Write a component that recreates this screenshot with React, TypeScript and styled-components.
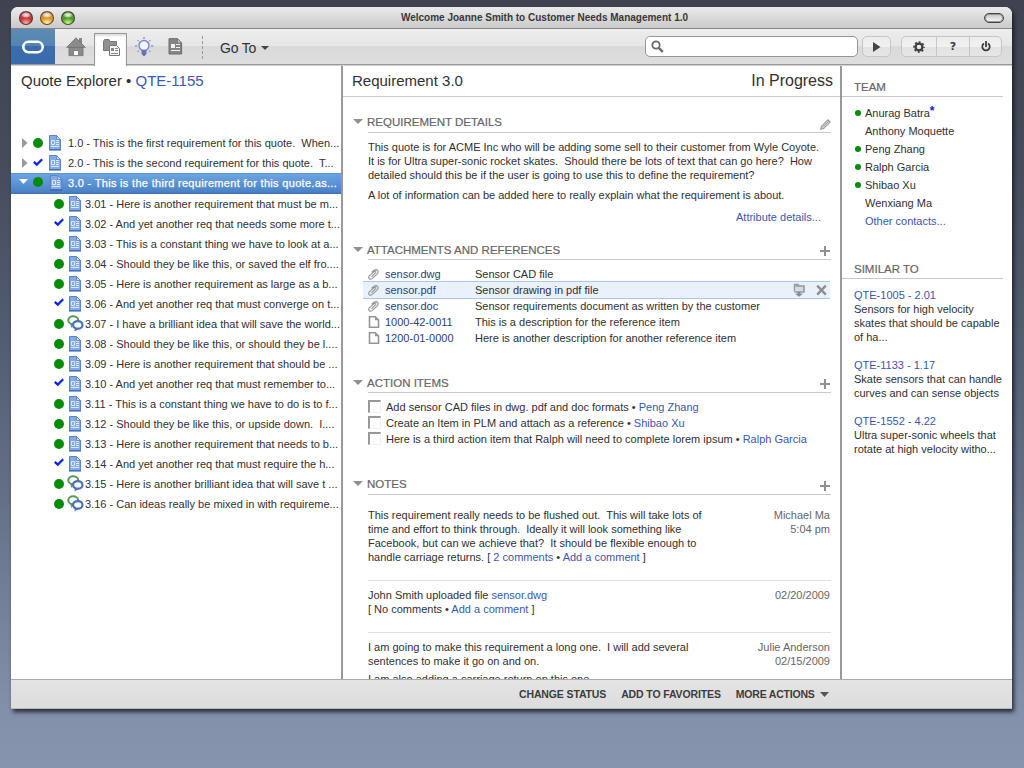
import React from "react";
import styled, { createGlobalStyle, css } from "styled-components";

const Global = createGlobalStyle`
  * { box-sizing: border-box; }
  body {
    margin: 0;
    height: 768px;
    overflow: hidden;
    background: linear-gradient(#3f434f 0px, #444b5a 150px, #525c70 330px, #657088 500px, #8390aa 710px, #8694ae 768px);
    font-family: "Liberation Sans", Arial, sans-serif;
    font-size: 11px;
    line-height: 14px;
    color: #303030;
  }
`;

const Desktop = styled.div`
  padding: 7px 12px 0 11px;
`;
const Window = styled.div`
  width: 1001px;
  height: 702px;
  display: flex;
  flex-direction: column;
  border-radius: 7px 7px 0 0;
  background: #fff;
  box-shadow: 2px 3px 4px rgba(20, 24, 34, 0.85);
  overflow: hidden;
`;

const T = styled.span<{ $ls?: number; $heavy?: boolean }>`
  white-space: pre;
  letter-spacing: ${(p) => p.$ls ?? 0}px;
  ${(p) => p.$heavy && "-webkit-text-stroke: 0.25px currentColor;"}
`;
const Link = styled(T)<{ $dark?: boolean }>`
  color: ${(p) => (p.$dark ? "#2b4178" : "#3a57b0")};
`;

/* Title bar */
const TitleBar = styled.header`
  flex: none;
  height: 22px;
  display: flex;
  align-items: center;
  padding: 0 8px;
  background: linear-gradient(#ebebeb, #cacaca);
  border-bottom: 1px solid #858585;
`;
const Lights = styled.div`
  width: 120px;
  display: flex;
  gap: 7px;
`;
const Light = styled.span<{ $a: string; $b: string; $c: string }>`
  width: 14px;
  height: 14px;
  border-radius: 50%;
  border: 1px solid rgba(50, 30, 30, 0.7);
  background: radial-gradient(ellipse 5px 3px at 50% 3px, rgba(255, 255, 255, 0.95) 0, rgba(255, 255, 255, 0.55) 60%, transparent 100%),
    radial-gradient(ellipse 6px 5px at 50% 11px, ${(p) => p.$c}, transparent),
    linear-gradient(${(p) => p.$a}, ${(p) => p.$b});
`;
const WindowTitle = styled.h1`
  flex: 1;
  margin: 0;
  padding-left: 66px;
  text-align: center;
  font-size: 10px;
  font-weight: bold;
  line-height: 20px;
  color: #383838;
`;
const PillWrap = styled.div`
  width: 120px;
  display: flex;
  justify-content: flex-end;
`;
const Pill = styled.span`
  width: 20px;
  height: 10px;
  border: 1px solid #444;
  border-radius: 5px;
  background: linear-gradient(#c4c4c4, #fafafa);
  box-shadow: inset 0 0 0 1px #999;
`;

/* Toolbar */
const Toolbar = styled.nav`
  flex: none;
  height: 37px;
  display: flex;
  align-items: flex-start;
  background: linear-gradient(#ededed 0, #e6e6e6 17px, #dadada 17px, #dedede 35px, #989898 35px, #989898 36px, #cfcfcf 36px);
`;
const Logo = styled.div`
  width: 44px;
  height: 35px;
  display: flex;
  align-items: center;
  justify-content: center;
  background: linear-gradient(#5e8bb5, #5484b2 17px, #3b6dae 17px, #3a6baa);
`;
const ToolIcon = styled.div<{ $w: number; $active?: boolean; $shift?: number }>`
  width: ${(p) => p.$w}px;
  height: 35px;
  display: flex;
  align-items: center;
  justify-content: center;
  padding-left: ${(p) => p.$shift ?? 0}px;
  ${(p) =>
    p.$active &&
    css`
      height: 33px;
      margin-top: 4px;
      padding-bottom: 4px;
      background: #fff;
      border: 1px solid #999;
      border-bottom: 0;
      box-shadow: inset 0 2px 2px #ddd;
    `}
`;
const Separator = styled.span`
  margin: 7px 17px 0 13px;
  height: 23px;
  border-left: 1px dashed #999;
`;
const GoTo = styled.div`
  display: flex;
  align-items: center;
  gap: 5px;
  width: 425px;
  height: 38px;
  font-size: 14px;
  color: #333;
`;
const Search = styled.div`
  width: 213px;
  height: 21px;
  margin: 7px 4px 0 0;
  padding: 3px 5px;
  border: 1px solid #959595;
  border-radius: 5px;
  background: #fff;
`;
const ButtonGroup = styled.div`
  display: flex;
  height: 21px;
  margin: 7px 10px 0 0;
  border: 1px solid #c6c6c6;
  border-radius: 5px;
  background: linear-gradient(#ececec, #f1f1f1 50%, #e2e2e2 52%, #e6e6e6);
`;
const ToolButton = styled.button<{ $w: number }>`
  width: ${(p) => p.$w}px;
  padding: 0;
  border: 0;
  background: none;
  display: flex;
  align-items: center;
  justify-content: center;
  font: bold 11px "DejaVu Sans", sans-serif;
  color: #3a3a3a;
  & + & { border-left: 1px solid #c6c6c6; }
`;

/* Panels */
const Panels = styled.main`
  flex: 1;
  min-height: 0;
  display: grid;
  grid-template-columns: 332px 499px 170px;
`;
const Explorer = styled.section`
  border-right: 2px solid #999;
  overflow: hidden;
`;
const ExplorerTitle = styled.h2`
  margin: 0;
  height: 67px;
  padding: 6px 0 0 10px;
  font-size: 15px;
  font-weight: normal;
  line-height: 18px;
`;
const TreeRow = styled.div<{ $child?: boolean; $selected?: boolean }>`
  height: 20px;
  display: flex;
  align-items: center;
  padding-left: ${(p) => (p.$child ? 42 : 8)}px;
  ${(p) =>
    p.$selected &&
    css`
      height: 21px;
      padding-bottom: 1px;
      color: #fff;
      background: linear-gradient(#4a84c8 0, #6da5e3 1px, #4a82c6 19px, #3c70b0);
    `}
`;
const Cell = styled.span<{ $w: number; $up?: number }>`
  flex: none;
  width: ${(p) => p.$w}px;
  display: flex;
  justify-content: center;
  padding-bottom: ${(p) => p.$up ?? 0}px;
`;
const Dot = styled.span<{ $s: number }>`
  width: ${(p) => p.$s}px;
  height: ${(p) => p.$s}px;
  border-radius: 50%;
  background: #058c05;
`;

const Detail = styled.section`
  border-right: 2px solid #999;
  overflow: hidden;
`;
const DetailHeader = styled.div`
  height: 31px;
  margin-bottom: 16px;
  display: flex;
  justify-content: space-between;
  padding: 6px 7px 0 9px;
  line-height: 18px;
  border-bottom: 1px solid #cbcbd2;
`;
const Big = styled.span<{ $size: number }>`
  font-size: ${(p) => p.$size}px;
`;
const Section = styled.section<{ $h: number }>`
  height: ${(p) => p.$h}px;
  padding-left: 10px;
`;
const SectionHead = styled.div`
  height: 20px;
  display: flex;
  width: 478px;
`;
const Arrow = styled.span<{ $low?: boolean }>`
  width: 15px;
  padding-top: ${(p) => (p.$low ? 7 : 6)}px;
  display: flex;
  align-items: flex-start;
`;
const SectionTitle = styled.h3<{ $low?: boolean }>`
  flex: 1;
  margin: 0;
  display: flex;
  justify-content: space-between;
  font-size: 11.5px;
  font-weight: normal;
  line-height: ${(p) => (p.$low ? 21 : 19)}px;
  color: #666;
  border-bottom: 1px solid #c8c8c8;
`;
const TitleText = styled(T)`
  margin-left: -1px;
  -webkit-text-stroke: 0.2px currentColor;
`;
const HeadIcon = styled.span`
  display: flex;
  padding-top: 6px;
`;
const Para = styled.p<{ $top: number }>`
  margin: ${(p) => p.$top}px 0 0 15px;
`;
const More = styled.div`
  margin: 8px 19px 0 0;
  text-align: right;
`;
const List = styled.div`
  padding-top: 6px;
`;
const FileRow = styled.div<{ $active?: boolean }>`
  height: 16px;
  width: 467px;
  margin-left: 10px;
  display: flex;
  align-items: center;
  ${(p) =>
    p.$active &&
    css`
      height: 18px;
      margin-top: -1px;
      margin-bottom: -1px;
      background: #e8f1fc;
      border: solid #aac8ec;
      border-width: 1px 0;
    `}
`;
const FileIcon = styled.span`
  width: 22px;
  padding-left: 5px;
  display: flex;
`;
const FileName = styled.span`
  width: 90px;
`;
const FileTools = styled.span`
  margin-left: auto;
  display: flex;
  align-items: center;
  gap: 11px;
  padding-right: 3px;
`;
const Task = styled.div`
  height: 16px;
  display: flex;
  align-items: center;
  margin-left: 15px;
`;
const Check = styled.span`
  width: 13px;
  height: 13px;
  margin: 0 5px 1px 0;
  border: 1px solid #f0f0f0;
  border-top: 2px solid #999;
  border-left: 2px solid #999;
`;
const Note = styled.article<{ $h: number; $top: number }>`
  height: ${(p) => p.$h}px;
  width: 463px;
  margin-left: 15px;
  padding: ${(p) => p.$top}px 1px 0 0;
  display: flex;
  justify-content: space-between;
  border-bottom: 1px solid #e0e0e0;
`;
const Line = styled.div<{ $gap?: number }>`
  height: 14px;
  margin-top: ${(p) => p.$gap ?? 0}px;
  white-space: pre;
`;
const Meta = styled.div`
  text-align: right;
  color: #666;
`;

/* Side panel */
const Side = styled.aside`
  padding-top: 11px;
`;
const SideTitle = styled.h3`
  margin: 0 9px 0 0;
  height: 20px;
  padding-left: 12px;
  border-bottom: 1px solid #c8c8c8;
  font-size: 11.5px;
  font-weight: normal;
  line-height: 20px;
  color: #666;
  -webkit-text-stroke: 0.2px currentColor;
`;
const Team = styled.ul`
  list-style: none;
  margin: 0;
  padding: 7px 0 0 12px;
  height: 162px;
`;
const Member = styled.li`
  height: 18px;
  display: flex;
  align-items: center;
`;
const Presence = styled.span`
  width: 11px;
  padding-left: 1px;
`;
const Star = styled.span`
  color: #1010d8;
  font: bold 12px "Liberation Sans", sans-serif;
  align-self: flex-start;
`;
const Similar = styled.div`
  padding: 9px 0 5px 12px;
  & + & { padding-top: 0; }
  margin-bottom: 9px;
`;

/* Footer */
const Footer = styled.footer`
  flex: none;
  height: 30px;
  display: flex;
  align-items: center;
  padding-left: 508px;
  gap: 15px;
  border-top: 1px solid #aaa;
  border-bottom: 1px solid #b8b8b8;
  background: linear-gradient(#e4e4e4, #dcdcdc);
  font-size: 10.5px;
  font-weight: bold;
  color: #3c3c3c;
`;
const FooterItem = styled.span`
  display: flex;
  align-items: center;
  gap: 5px;
`;

const Tri = ({ w, h, color }: { w: number; h: number; color: string }) => (
  <svg width={w} height={h} viewBox="0 0 10 6" preserveAspectRatio="none">
    <path d="M0 0H10L5 6Z" fill={color} />
  </svg>
);
const TriRight = () => (
  <svg width="6" height="10"><path d="M0 0L5.5 5L0 10Z" fill="#999" /></svg>
);
const Plus = () => (
  <svg width="11" height="10"><path d="M5 0V10M0 5H10" stroke="#8f8f8f" strokeWidth="2" /></svg>
);
const Pencil = () => (
  <svg width="11" height="11" viewBox="0 0 11 11">
    <path d="M.8 10.2L1.4 7.4L7.9.9L10.1 3.1L3.6 9.6Z" fill="#ddd" stroke="#969696" strokeWidth="1.1" />
    <path d="M2.5 8.5L8.7 2.3" stroke="#a5a5a5" />
  </svg>
);
const DocIcon = () => (
  <svg width="14" height="16" viewBox="0 0 14 16">
    <path d="M1.5.5H8.5L12.5 4.5V14.5H1.5Z" fill="#86aae4" stroke="#5a84cb" />
    <path d="M8.5.5V4.5H12.5Z" fill="#c5d8f6" stroke="#5a84cb" strokeWidth=".8" />
    <path d="M1 15H13" stroke="#2f58a8" />
    <path d="M3.5 5.5H6.5V9.5H3.5ZM8 5.5H11M8 7.5H11M8 9.5H11M3 11.5H11" fill="none" stroke="#dce8fc" />
  </svg>
);
const ChatIcon = () => (
  <svg width="17" height="17" viewBox="0 0 17 17">
    <path d="M3 7.5L4.2 13L7.5 9Z" fill="#559a55" />
    <ellipse cx="6.2" cy="5.2" rx="4.9" ry="3.9" fill="#fff" stroke="#559a55" strokeWidth="2" />
    <path d="M8 12.5L7.5 16.5L12 13.7Z" fill="#4d70bd" />
    <ellipse cx="10.8" cy="9.9" rx="4.7" ry="3.8" fill="#fff" stroke="#4d70bd" strokeWidth="2.2" />
  </svg>
);
const Tick = () => (
  <svg width="10" height="9" viewBox="0 0 10 9">
    <path d="M.8 3.8L3.8 6.6L9.2 1.2" fill="none" stroke="#0a28ee" strokeWidth="2.3" />
  </svg>
);
const Clip = () => (
  <svg width="11" height="11" viewBox="0 0 11 11" fill="none" stroke="#959595" strokeWidth="1.1">
    <path d="M3.4 7.8L7.7 3.6C8.5 2.6 7.4 1.7 6.5 2.4L1.6 6.7C-.4 8.8 1.6 11.2 4 9.6L9 5.1C11.6 2.6 9.2-.6 6.2 1.2L3.6 3.2" />
  </svg>
);
const Page = () => (
  <svg width="12" height="12" viewBox="0 0 12 12">
    <path d="M1.5.8H7.2L10.5 4V11.2H1.5Z" fill="#fff" stroke="#949494" strokeWidth="1.6" />
    <path d="M7 .5V4.2H10.5Z" fill="#949494" />
  </svg>
);
const Home = () => (
  <svg width="20" height="20" viewBox="0 0 20 20" fill="#8b8b8b" stroke="#707070" strokeWidth=".8">
    <path d="M13.5 1.5H15.5V6L13.5 4.5Z" />
    <path d="M3 10.5H17V18.6H3Z" />
    <path d="M10 .8L19.3 10.4H.7Z" />
    <path d="M7.5 13.5H12.5V18.6H7.5Z" fill="#fff" />
  </svg>
);
const FolderDoc = () => (
  <svg width="17" height="18" viewBox="0 0 17 18">
    <path d="M.5 2.5L1.5.5H6L7 2.5H13.5V11.5H.5Z" fill="#909090" stroke="#777" />
    <path d="M6.5 6.5H13.5L16.5 9.5V16.5H6.5Z" fill="#f4f4f4" stroke="#777" />
    <path d="M8 9H11V12H8Z" fill="#888" />
    <path d="M12 9.5H15M12 11.5H15M8 14.5H15" stroke="#888" />
  </svg>
);
const Bulb = () => (
  <svg width="20" height="20" viewBox="0 0 20 20">
    <path d="M10 0V2M1 9H3M17 9H19.5M3.5 3L5 4.5M16.5 3L15 4.5M3.5 15L5 13.5M16.5 15L15 13.5" stroke="#6c73bd" />
    <circle cx="10" cy="8.5" r="5" fill="#f3f4ff" stroke="#7c83cd" strokeWidth="1.4" />
    <path d="M7.5 13H12.5V17L10 19.5L7.5 17Z" fill="#676fc0" />
  </svg>
);
const DocTool = () => (
  <svg width="15" height="17" viewBox="0 0 15 17">
    <path d="M1 .7H9.5L13.6 5V16H1Z" fill="#858585" stroke="#6c6c6c" />
    <path d="M9.5.7V5H13.6Z" fill="#ccc" stroke="#6c6c6c" strokeWidth=".7" />
    <path d="M3 6H7V10H3Z" fill="#f2f2f2" />
    <path d="M8 6.5H12M8 9.5H12M3 12.5H12" stroke="#f2f2f2" />
  </svg>
);
const Magnifier = () => (
  <svg width="13" height="13" viewBox="0 0 13 13" fill="none" stroke="#696969">
    <circle cx="5" cy="5" r="3.7" strokeWidth="1.8" />
    <path d="M7.8 7.8L11.8 11.8" strokeWidth="2.4" />
  </svg>
);
const Gear = () => (
  <svg width="12" height="12" viewBox="0 0 12 12" fill="none" stroke="#3d3d3d">
    <circle cx="6" cy="6" r="3.4" strokeWidth="2.2" />
    <circle cx="6" cy="6" r="5" strokeWidth="1.6" strokeDasharray="2 1.93" strokeDashoffset="1" />
  </svg>
);
const Power = () => (
  <svg width="10" height="11" viewBox="0 0 10 11" fill="none" stroke="#3d3d3d" strokeWidth="1.8">
    <path d="M3 2.6A3.7 3.7 0 1 0 7 2.6M5 0V6" />
  </svg>
);
const Download = () => (
  <svg width="12" height="14" viewBox="0 0 12 14">
    <path d="M1.5 8.5V1.5H5L6 3" fill="#c9d2de" stroke="#999" strokeWidth="1.5" />
    <path d="M3 3H11V9H1.5" fill="#d3dce8" stroke="#999" strokeWidth="1.6" />
    <path d="M4.5 9H7.5V10.8H10L6 13.8L2 10.8H4.5Z" fill="#8b8b8b" />
  </svg>
);
const Cross = () => (
  <svg width="11" height="12" viewBox="0 0 11 12">
    <path d="M1.2 1.7L9.8 10.7M9.8 1.7L1.2 10.7" stroke="#8f8f8f" strokeWidth="2.4" />
  </svg>
);

type Kind = "dot" | "tick" | "chat";
const children: [string, Kind][] = [
  ["3.01 - Here is another requirement that must be m...", "dot"],
  ["3.02 - And yet another req that needs some more t...", "tick"],
  ["3.03 - This is a constant thing we have to look at a...", "dot"],
  ["3.04 - Should they be like this, or saved the elf fro....", "dot"],
  ["3.05 - Here is another requirement as large as a b...", "dot"],
  ["3.06 - And yet another req that must converge on t...", "tick"],
  ["3.07 - I have a brilliant idea that will save the world...", "chat"],
  ["3.08 - Should they be like this, or should they be l....", "dot"],
  ["3.09 - Here is another requirement that should be ...", "dot"],
  ["3.10 - And yet another req that must remember to...", "tick"],
  ["3.11 - This is a constant thing we have to do is to f...", "dot"],
  ["3.12 - Should they be like this, or upside down.  I....", "dot"],
  ["3.13 - Here is another requirement that needs to b...", "dot"],
  ["3.14 - And yet another req that must require the h...", "tick"],
  ["3.15 - Here is another brilliant idea that will save t ...", "chat"],
  ["3.16 - Can ideas really be mixed in with requireme...", "chat"],
];

const files = [
  { name: "sensor.dwg", text: "Sensor CAD file", clip: true },
  { name: "sensor.pdf", text: "Sensor drawing in pdf file", clip: true, active: true },
  { name: "sensor.doc", text: "Sensor requirements document as written by the customer", clip: true },
  { name: "1000-42-0011", text: "This is a description for the reference item" },
  { name: "1200-01-0000", text: "Here is another description for another reference item" },
];

const tasks = [
  ["Add sensor CAD files in dwg. pdf and doc formats • ", "Peng Zhang"],
  ["Create an Item in PLM and attach as a reference • ", "Shibao Xu"],
  ["Here is a third action item that Ralph will need to complete lorem ipsum • ", "Ralph Garcia"],
];

const team: [string, boolean][] = [
  ["Anurag Batra", true],
  ["Anthony Moquette", false],
  ["Peng Zhang", true],
  ["Ralph Garcia", true],
  ["Shibao Xu", true],
  ["Wenxiang Ma", false],
];

const similar = [
  ["QTE-1005 - 2.01", "Sensors for high velocity", "skates that should be capable", "of ha..."],
  ["QTE-1133 - 1.17", "Skate sensors that can handle", "curves and can sense objects"],
  ["QTE-1552 - 4.22", "Ultra super-sonic wheels that", "rotate at high velocity witho..."],
];

const Head = ({ title, icon, low }: { title: string; icon: React.ReactNode; low?: boolean }) => (
  <SectionHead>
    <Arrow $low={low}><Tri w={10} h={5} color="#8f8f8f" /></Arrow>
    <SectionTitle $low={low}>
      <TitleText>{title}</TitleText>
      <HeadIcon>{icon}</HeadIcon>
    </SectionTitle>
  </SectionHead>
);

export default function App() {
  return (
    <>
      <Global />
      <Desktop>
        <Window>
          <TitleBar>
            <Lights>
              <Light $a="#b04848" $b="#d83030" $c="#ffb0a4" />
              <Light $a="#c08030" $b="#f4a828" $c="#fff4a0" />
              <Light $a="#508a3c" $b="#50b020" $c="#ccfa90" />
            </Lights>
            <WindowTitle><T>Welcome Joanne Smith to Customer Needs Management 1.0</T></WindowTitle>
            <PillWrap><Pill /></PillWrap>
          </TitleBar>

          <Toolbar>
            <Logo>
              <svg width="22" height="14"><rect x="1.3" y="1.8" width="19.4" height="10.4" rx="5.2" fill="none" stroke="#fff" strokeWidth="2.6" /></svg>
            </Logo>
            <ToolIcon $w={39} $shift={2}><Home /></ToolIcon>
            <ToolIcon $w={33} $active $shift={1}><FolderDoc /></ToolIcon>
            <ToolIcon $w={34}><Bulb /></ToolIcon>
            <ToolIcon $w={28}><DocTool /></ToolIcon>
            <Separator />
            <GoTo><T $ls={-0.2}>Go To</T><Tri w={8} h={4} color="#444" /></GoTo>
            <Search><Magnifier /></Search>
            <ButtonGroup>
              <ToolButton $w={27}><svg width="8" height="10"><path d="M0 0L7.5 5L0 10Z" fill="#444" /></svg></ToolButton>
            </ButtonGroup>
            <ButtonGroup>
              <ToolButton $w={34}><Gear /></ToolButton>
              <ToolButton $w={33}>?</ToolButton>
              <ToolButton $w={32}><Power /></ToolButton>
            </ButtonGroup>
          </Toolbar>

          <Panels>
            <Explorer>
              <ExplorerTitle><T>Quote Explorer • </T><Link>QTE-1155</Link></ExplorerTitle>
              <TreeRow>
                <Cell $w={11}><TriRight /></Cell>
                <Cell $w={16}><Dot $s={10} /></Cell>
                <Cell $w={18}><DocIcon /></Cell>
                <Cell $w={4} /><T>1.0 - This is the first requirement for this quote.  When...</T>
              </TreeRow>
              <TreeRow>
                <Cell $w={11}><TriRight /></Cell>
                <Cell $w={16} $up={2}><Tick /></Cell>
                <Cell $w={18}><DocIcon /></Cell>
                <Cell $w={4} /><T>2.0 - This is the second requirement for this quote.  T...</T>
              </TreeRow>
              <TreeRow $selected>
                <Cell $w={9} $up={3}><Tri w={9} h={5} color="#fff" /></Cell>
                <Cell $w={20} $up={3}><Dot $s={10} /></Cell>
                <Cell $w={16}><DocIcon /></Cell>
                <Cell $w={4} /><T $ls={0.31} $heavy>3.0 - This is the third requirement for this quote.as...</T>
              </TreeRow>
              {children.map(([text, kind]) => (
                <TreeRow $child key={text}>
                  <Cell $w={12} $up={kind === "tick" ? 3 : 1}>{kind === "tick" ? <Tick /> : <Dot $s={10} />}</Cell>
                  <Cell $w={20} $up={1}>{kind === "chat" ? <ChatIcon /> : <DocIcon />}</Cell>
                  <T>{text}</T>
                </TreeRow>
              ))}
            </Explorer>

            <Detail>
              <DetailHeader>
                <Big $size={15}>Requirement 3.0</Big>
                <Big $size={16}>In Progress</Big>
              </DetailHeader>
              <Section $h={127}>
                <Head title="REQUIREMENT DETAILS" icon={<Pencil />} />
                <Para $top={7}>
                  <T>{"This quote is for ACME Inc who will be adding some sell to their customer from Wyle Coyote.\n"}</T>
                  <T>{"It is for Ultra super-sonic rocket skates.  Should there be lots of text that can go here?  How\n"}</T>
                  <T>detailed should this be if the user is going to use this to define the requirement?</T>
                </Para>
                <Para $top={6}><T>A lot of information can be added here to really explain what the requirement is about.</T></Para>
                <More><Link>Attribute details...</Link></More>
              </Section>
              <Section $h={133}>
                <Head title="ATTACHMENTS AND REFERENCES" icon={<Plus />} low />
                <List>
                  {files.map((f) => (
                    <FileRow key={f.name} $active={f.active}>
                      <FileIcon>{f.clip ? <Clip /> : <Page />}</FileIcon>
                      <FileName><Link $dark>{f.name}</Link></FileName>
                      <T>{f.text}</T>
                      {f.active && <FileTools><Download /><Cross /></FileTools>}
                    </FileRow>
                  ))}
                </List>
              </Section>
              <Section $h={102}>
                <Head title="ACTION ITEMS" icon={<Plus />} low />
                <List>
                  {tasks.map(([text, who]) => (
                    <Task key={who}><Check /><T>{text}</T><Link>{who}</Link></Task>
                  ))}
                </List>
              </Section>
              <Section $h={210}>
                <Head title="NOTES" icon={<Plus />} />
                <Note $h={86} $top={13}>
                  <div>
                    <Line>This requirement really needs to be flushed out.  This will take lots of</Line>
                    <Line>time and effort to think through.  Ideally it will look something like</Line>
                    <Line>Facebook, but can we achieve that?  It should be flexible enough to</Line>
                    <Line>handle carriage returns. [ <Link>2 comments</Link> • <Link>Add a comment</Link> ]</Line>
                  </div>
                  <Meta><Line>Michael Ma</Line><Line>5:04 pm</Line></Meta>
                </Note>
                <Note $h={52} $top={7}>
                  <div>
                    <Line>John Smith uploaded file <Link>sensor.dwg</Link></Line>
                    <Line>[ No comments • <Link>Add a comment</Link> ]</Line>
                  </div>
                  <Meta><Line>02/20/2009</Line></Meta>
                </Note>
                <Note $h={80} $top={7}>
                  <div>
                    <Line>I am going to make this requirement a long one.  I will add several</Line>
                    <Line>sentences to make it go on and on.</Line>
                    <Line $gap={4}>I am also adding a carriage return on this one.</Line>
                  </div>
                  <Meta><Line>Julie Anderson</Line><Line>02/15/2009</Line></Meta>
                </Note>
              </Section>
            </Detail>

            <Side>
              <SideTitle>TEAM</SideTitle>
              <Team>
                {team.map(([name, online]) => (
                  <Member key={name}>
                    <Presence>{online && <Dot as="div" $s={6} />}</Presence>
                    <T>{name}</T>
                    {name === "Anurag Batra" && <Star>*</Star>}
                  </Member>
                ))}
                <Member><Presence /><Link>Other contacts...</Link></Member>
              </Team>
              <SideTitle>SIMILAR TO</SideTitle>
              {similar.map(([id, ...lines]) => (
                <Similar key={id}>
                  <Line><Link>{id}</Link></Line>
                  {lines.map((l) => <Line key={l}>{l}</Line>)}
                </Similar>
              ))}
            </Side>
          </Panels>

          <Footer>
            <FooterItem><T $ls={-0.13}>CHANGE STATUS</T></FooterItem>
            <FooterItem><T $ls={-0.13}>ADD TO FAVORITES</T></FooterItem>
            <FooterItem><T $ls={-0.2}>MORE ACTIONS</T><Tri w={9} h={5} color="#555" /></FooterItem>
          </Footer>
        </Window>
      </Desktop>
    </>
  );
}
